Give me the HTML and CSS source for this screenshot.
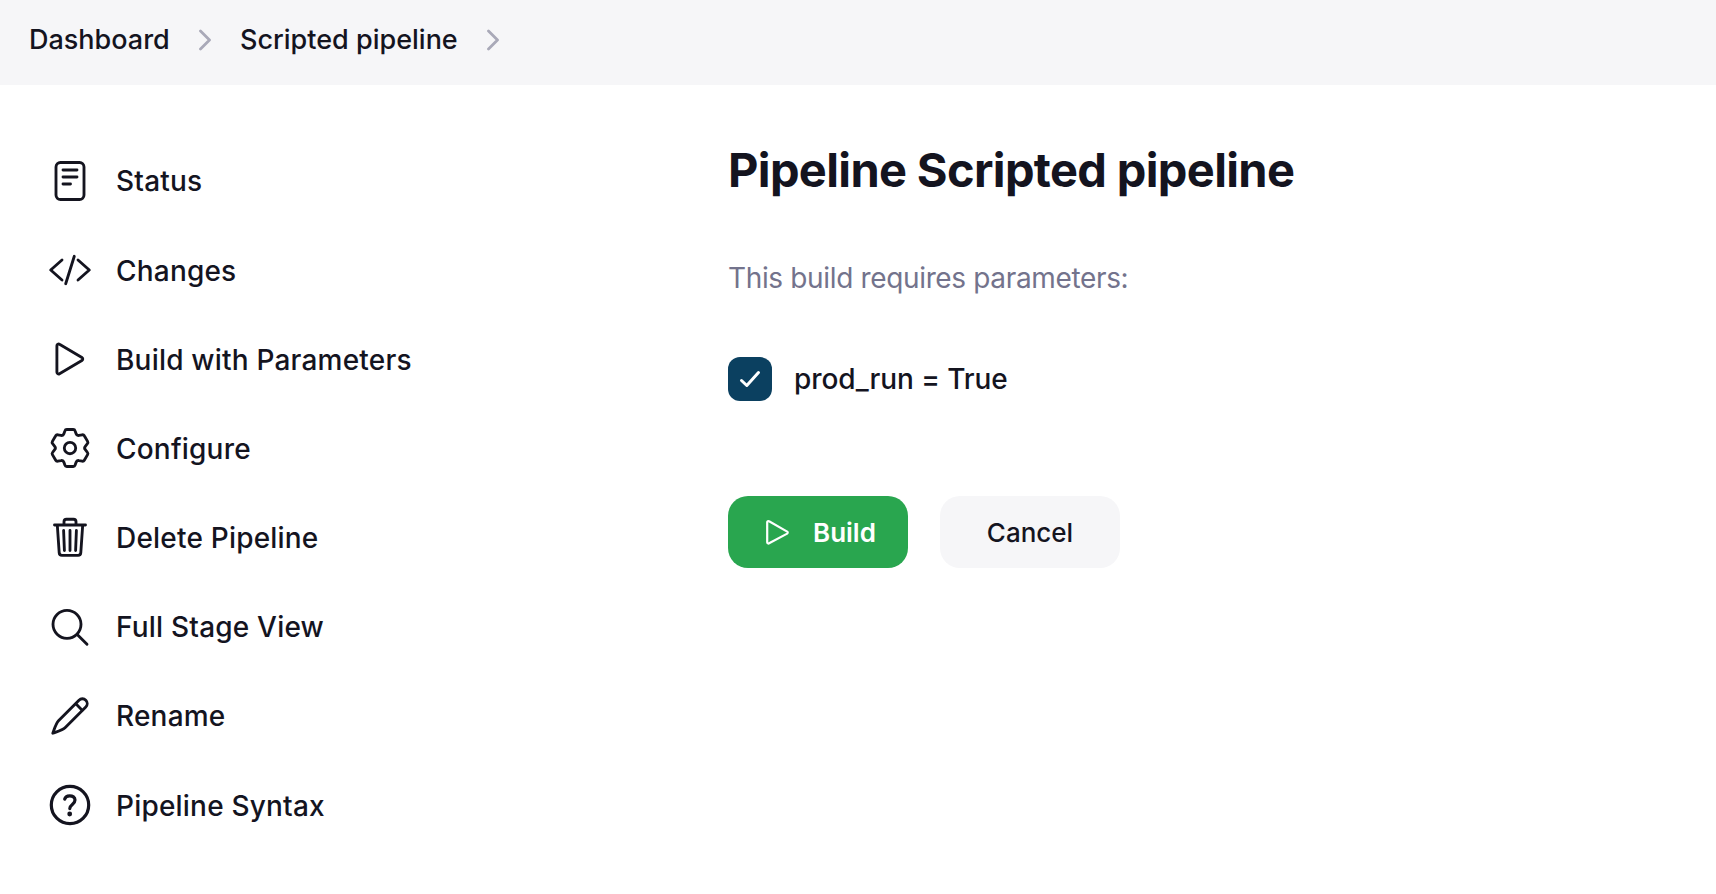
FILE: index.html
```html
<!DOCTYPE html>
<html lang="en">
<head>
<meta charset="utf-8">
<title>Scripted pipeline</title>
<link rel="stylesheet" href="styles.css">
</head>
<body>
<nav class="breadcrumbs">
  <a class="crumb crumb-home">Dashboard</a>
  <svg class="chevron" viewBox="0 0 14 22"><path d="M1.500 2l9 9-9 9"/></svg>
  <a class="crumb crumb-job">Scripted pipeline</a>
  <svg class="chevron" viewBox="0 0 14 22"><path d="M1.500 2l9 9-9 9"/></svg>
</nav>
<div class="page">
  <aside class="tasks">
    <a class="task"><svg class="icon" viewBox="0 0 48 48"><rect x="10" y="5.5" width="28" height="37" rx="4.5"/><path d="M17 13h14M17 20h14M17 27h7.5"/></svg><span class="label">Status</span></a>
    <a class="task"><svg class="icon" viewBox="0 0 48 48"><path d="M16 14L4.700 24 16 34M32 14l11.300 10L32 34M28.300 10.300l-8.600 27.400"/></svg><span class="label">Changes</span></a>
    <a class="task"><svg class="icon" viewBox="0 0 48 48"><path d="M10.900 10.700v26.600a1.700 1.700 0 0 0 2.600 1.400l22.400-13.100a1.900 1.900 0 0 0 0-3.200L13.500 9.300a1.700 1.700 0 0 0-2.600 1.400z"/></svg><span class="label">Build with Parameters</span></a>
    <a class="task"><svg class="icon" viewBox="0 0 48 48"><circle cx="24" cy="24" r="5.700"/><path d="M20.800 5.500h6.400a2 2 0 0 1 1.900 1.400l1 2.900a2.500 2.500 0 0 0 2.900 1.600l3.200-.6a2 2 0 0 1 2.100 1l3.300 5.600a2 2 0 0 1-.2 2.300l-2.100 2.600a2.700 2.700 0 0 0 0 3.400l2.100 2.600a2 2 0 0 1 .2 2.300l-3.300 5.600a2 2 0 0 1-2.100 1l-3.200-.6a2.500 2.500 0 0 0-2.900 1.600l-1 2.900a2 2 0 0 1-1.900 1.400h-6.400a2 2 0 0 1-1.900-1.400l-1-2.900a2.500 2.500 0 0 0-2.900-1.600l-3.200.6a2 2 0 0 1-2.100-1l-3.300-5.600a2 2 0 0 1 .2-2.300l2.100-2.600a2.700 2.700 0 0 0 0-3.400l-2.100-2.600a2 2 0 0 1-.2-2.300l3.300-5.600a2 2 0 0 1 2.100-1l3.200.6a2.500 2.500 0 0 0 2.900-1.600l1-2.900a2 2 0 0 1 1.900-1.400z"/></svg><span class="label">Configure</span></a>
    <a class="task"><svg class="icon" viewBox="0 0 48 48"><path d="M8.500 12h31M11.300 12l1.900 27.600a2.800 2.800 0 0 0 2.800 2.700h16a2.800 2.800 0 0 0 2.800-2.700L36.700 12M18 12V8.700a2.500 2.500 0 0 1 2.500-2.500h7A2.500 2.500 0 0 1 30 8.700V12M24 17.500v20M17.600 17.500l.8 20M30.400 17.500l-.8 20"/></svg><span class="label">Delete Pipeline</span></a>
    <a class="task"><svg class="icon" viewBox="0 0 48 48"><circle cx="21" cy="21.300" r="14"/><path d="M31.200 31.500L41 41.300"/></svg><span class="label">Full Stage View</span></a>
    <a class="task"><svg class="icon" viewBox="0 0 48 48"><path d="M33 8.200L12.500 28.700C10 31.200 8.200 37.500 6.800 41.200c3.700-1.400 10-3.200 12.500-5.700L39.800 15a4.800 4.800 0 0 0-6.800-6.800zM29.600 11.600l6.800 6.800"/></svg><span class="label">Rename</span></a>
    <a class="task"><svg class="icon icon-help" viewBox="0 0 48 48"><circle cx="24" cy="24" r="18.700"/><path d="M18.700 18.200c.5-2.400 2.500-3.400 5-3.400 3 0 5.300 1.500 5.300 4.200 0 4.500-5.200 4.300-5.200 8.600"/><circle class="dot" cx="23.700" cy="33" r="2.400"/></svg><span class="label">Pipeline Syntax</span></a>
  </aside>
  <main class="content">
    <h1 class="title">Pipeline Scripted pipeline</h1>
    <p class="hint">This build requires parameters:</p>
    <label class="param"><span class="checkbox"><svg viewBox="0 0 44 44"><path d="M13.500 23.500l5.300 5L30.500 15.500"/></svg></span><span class="param-name">prod_run = True</span></label>
    <div class="actions">
      <button class="button button-build"><svg viewBox="0 0 28 28"><path d="M3.200 4.300v20a1.200 1.200 0 0 0 1.900 1L23.200 15.600a1.200 1.200 0 0 0 0-2L5.100 3.300A1.200 1.200 0 0 0 3.200 4.300z"/></svg><span>Build</span></button>
      <button class="button button-cancel">Cancel</button>
    </div>
  </main>
</div>
</body>
</html>
```
FILE: styles.css
```css
* { box-sizing: border-box; }
body {
  margin: 0;
  background: #fff;
  color: #14141f;
  font-family: Inter, "Liberation Sans", sans-serif;
  font-size: 28px;
  font-weight: 500;
}
svg { flex: none; fill: none; stroke: currentColor; stroke-linecap: round; stroke-linejoin: round; }
.breadcrumbs {
  display: flex;
  align-items: center;
  height: 85px;
  padding: 0 29px 5px;
  background: #f6f6f8;
  font-size: 27px;
}
.crumb { white-space: nowrap; padding-bottom: 2px; }
.crumb-home { width: 142px; }
.crumb-job { width: 219px; }
.chevron { width: 14px; height: 22px; margin: 0 27px 0 28px; stroke: #a9a9b8; stroke-width: 2.8; }
.page { display: flex; }
.tasks { width: 728px; padding: 51px 0 0 46px; }
.task { display: flex; align-items: center; gap: 22px; height: 89.200px; white-space: nowrap; }
.label { padding-top: 1.500px; letter-spacing: .2px; }
.icon { width: 48px; height: 48px; stroke-width: 2.850; }
.icon-help { stroke-width: 3.200; }
.dot { fill: currentColor; stroke: none; }
.content { padding-top: 55px; }
.title { margin: 0; font-size: 47px; line-height: 60px; font-weight: 700; letter-spacing: -.650px; white-space: nowrap; }
.hint { margin: 60px 0 0; font-weight: 400; line-height: 36px; letter-spacing: -.350px; color: #73738c; }
.param { display: flex; align-items: center; gap: 22px; margin-top: 61px; height: 44px; }
.param-name { letter-spacing: -.080px; }
.checkbox { display: flex; width: 44px; height: 44px; border-radius: 12px; background: #0b4060; color: #fff; }
.checkbox svg { width: 44px; height: 44px; stroke-width: 3; }
.actions { display: flex; gap: 32px; margin-top: 95px; }
.button {
  display: flex;
  align-items: center;
  justify-content: center;
  width: 180px;
  height: 72px;
  padding: 0;
  border: 0;
  border-radius: 20px;
  font: 500 26px Inter, "Liberation Sans", sans-serif;
  color: #14141f;
  background: #f6f6f8;
}
.button-build { gap: 21px; justify-content: flex-start; padding-left: 36px; background: #29a64f; color: #fff; font-weight: 600; }
.button-build svg { width: 28px; height: 28px; stroke-width: 2.2; }
```
